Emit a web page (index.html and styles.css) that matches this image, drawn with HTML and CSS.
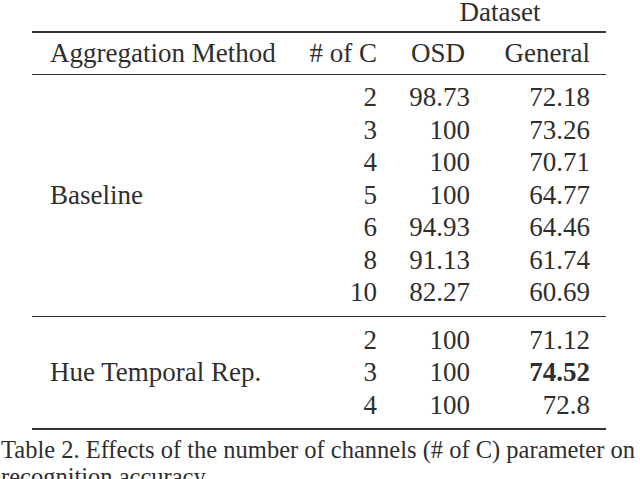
FILE: index.html
```html
<!DOCTYPE html>
<html>
<head>
<meta charset="utf-8">
<link rel="stylesheet" href="styles.css">
</head>
<body>
<div class="page">
  <table class="results">
    <colgroup>
      <col class="c-method">
      <col class="c-num">
      <col class="c-osd">
      <col class="c-gen">
    </colgroup>
    <thead>
      <tr class="super">
        <th class="blank"></th>
        <th class="blank"></th>
        <th class="dataset" colspan="2">Dataset</th>
      </tr>
      <tr class="head">
        <th class="method">Aggregation Method</th>
        <th class="num">#&nbsp;of&nbsp;C</th>
        <th class="num osd">OSD</th>
        <th class="num gen">General</th>
      </tr>
    </thead>
    <tbody class="group">
      <tr class="first"><td class="method" rowspan="7">Baseline</td><td class="num">2</td><td class="num">98.73</td><td class="num gen">72.18</td></tr>
      <tr><td class="num">3</td><td class="num">100</td><td class="num gen">73.26</td></tr>
      <tr><td class="num">4</td><td class="num">100</td><td class="num gen">70.71</td></tr>
      <tr><td class="num">5</td><td class="num">100</td><td class="num gen">64.77</td></tr>
      <tr><td class="num">6</td><td class="num">94.93</td><td class="num gen">64.46</td></tr>
      <tr><td class="num">8</td><td class="num">91.13</td><td class="num gen">61.74</td></tr>
      <tr class="last"><td class="num">10</td><td class="num">82.27</td><td class="num gen">60.69</td></tr>
    </tbody>
    <tbody class="group second">
      <tr class="first"><td class="method" rowspan="3">Hue Temporal Rep.</td><td class="num">2</td><td class="num">100</td><td class="num gen">71.12</td></tr>
      <tr><td class="num">3</td><td class="num">100</td><td class="num gen best">74.52</td></tr>
      <tr class="last"><td class="num">4</td><td class="num">100</td><td class="num gen">72.8</td></tr>
    </tbody>
  </table>
  <p class="caption">Table 2. Effects of the number of channels (# of C) parameter on<br>recognition accuracy.</p>
</div>
</body>
</html>
```

FILE: styles.css
```css
html, body {
  margin: 0;
  padding: 0;
  background: #ffffff;
  font-family: "Times New Roman", serif;
}
.page {
  width: 640px;
  height: 479px;
  overflow: hidden;
  font-family: "Times New Roman", serif;
  color: #2e2e2e;
}
.results {
  margin-left: 32px;
  width: 574px;
  table-layout: fixed;
  border-collapse: collapse;
  font-family: "Times New Roman", serif;
  font-size: 27px;
  line-height: 32.5px;
}
.c-method { width: 268px; }
.c-num { width: 77px; }
.c-osd { width: 93px; }
.c-gen { width: 136px; }
.results th,
.results td {
  padding: 0;
  font-family: "Times New Roman", serif;
  font-weight: normal;
  white-space: nowrap;
}
.super th {
  height: 24px;
  line-height: 24px;
  padding-bottom: 7px;
  border-bottom: 2px solid #333;
}
.results .dataset {
  text-align: center;
  padding-left: 17px;
}
.head th {
  height: 41px;
  line-height: 41px;
  border-bottom: 1px solid #333;
}
.results .method {
  text-align: left;
  padding-left: 18px;
  vertical-align: middle;
}
.num {
  text-align: right;
}
.results .osd {
  padding-right: 5px;
}
.results .gen {
  padding-right: 16px;
}
.group .first td.num {
  padding-top: 6px;
}
.group .last td.num {
  padding-bottom: 7px;
}
.group {
  border-bottom: 1px solid #333;
}
.second .first td.num {
  padding-top: 7px;
}
.second .last td.num {
  padding-bottom: 7px;
}
.group.second {
  border-bottom: 2px solid #333;
}
.results .best {
  font-weight: bold;
}
.caption {
  margin: 6px 0 0 1px;
  font-family: "Times New Roman", serif;
  font-size: 24.5px;
  line-height: 27px;
  white-space: nowrap;
}
```
